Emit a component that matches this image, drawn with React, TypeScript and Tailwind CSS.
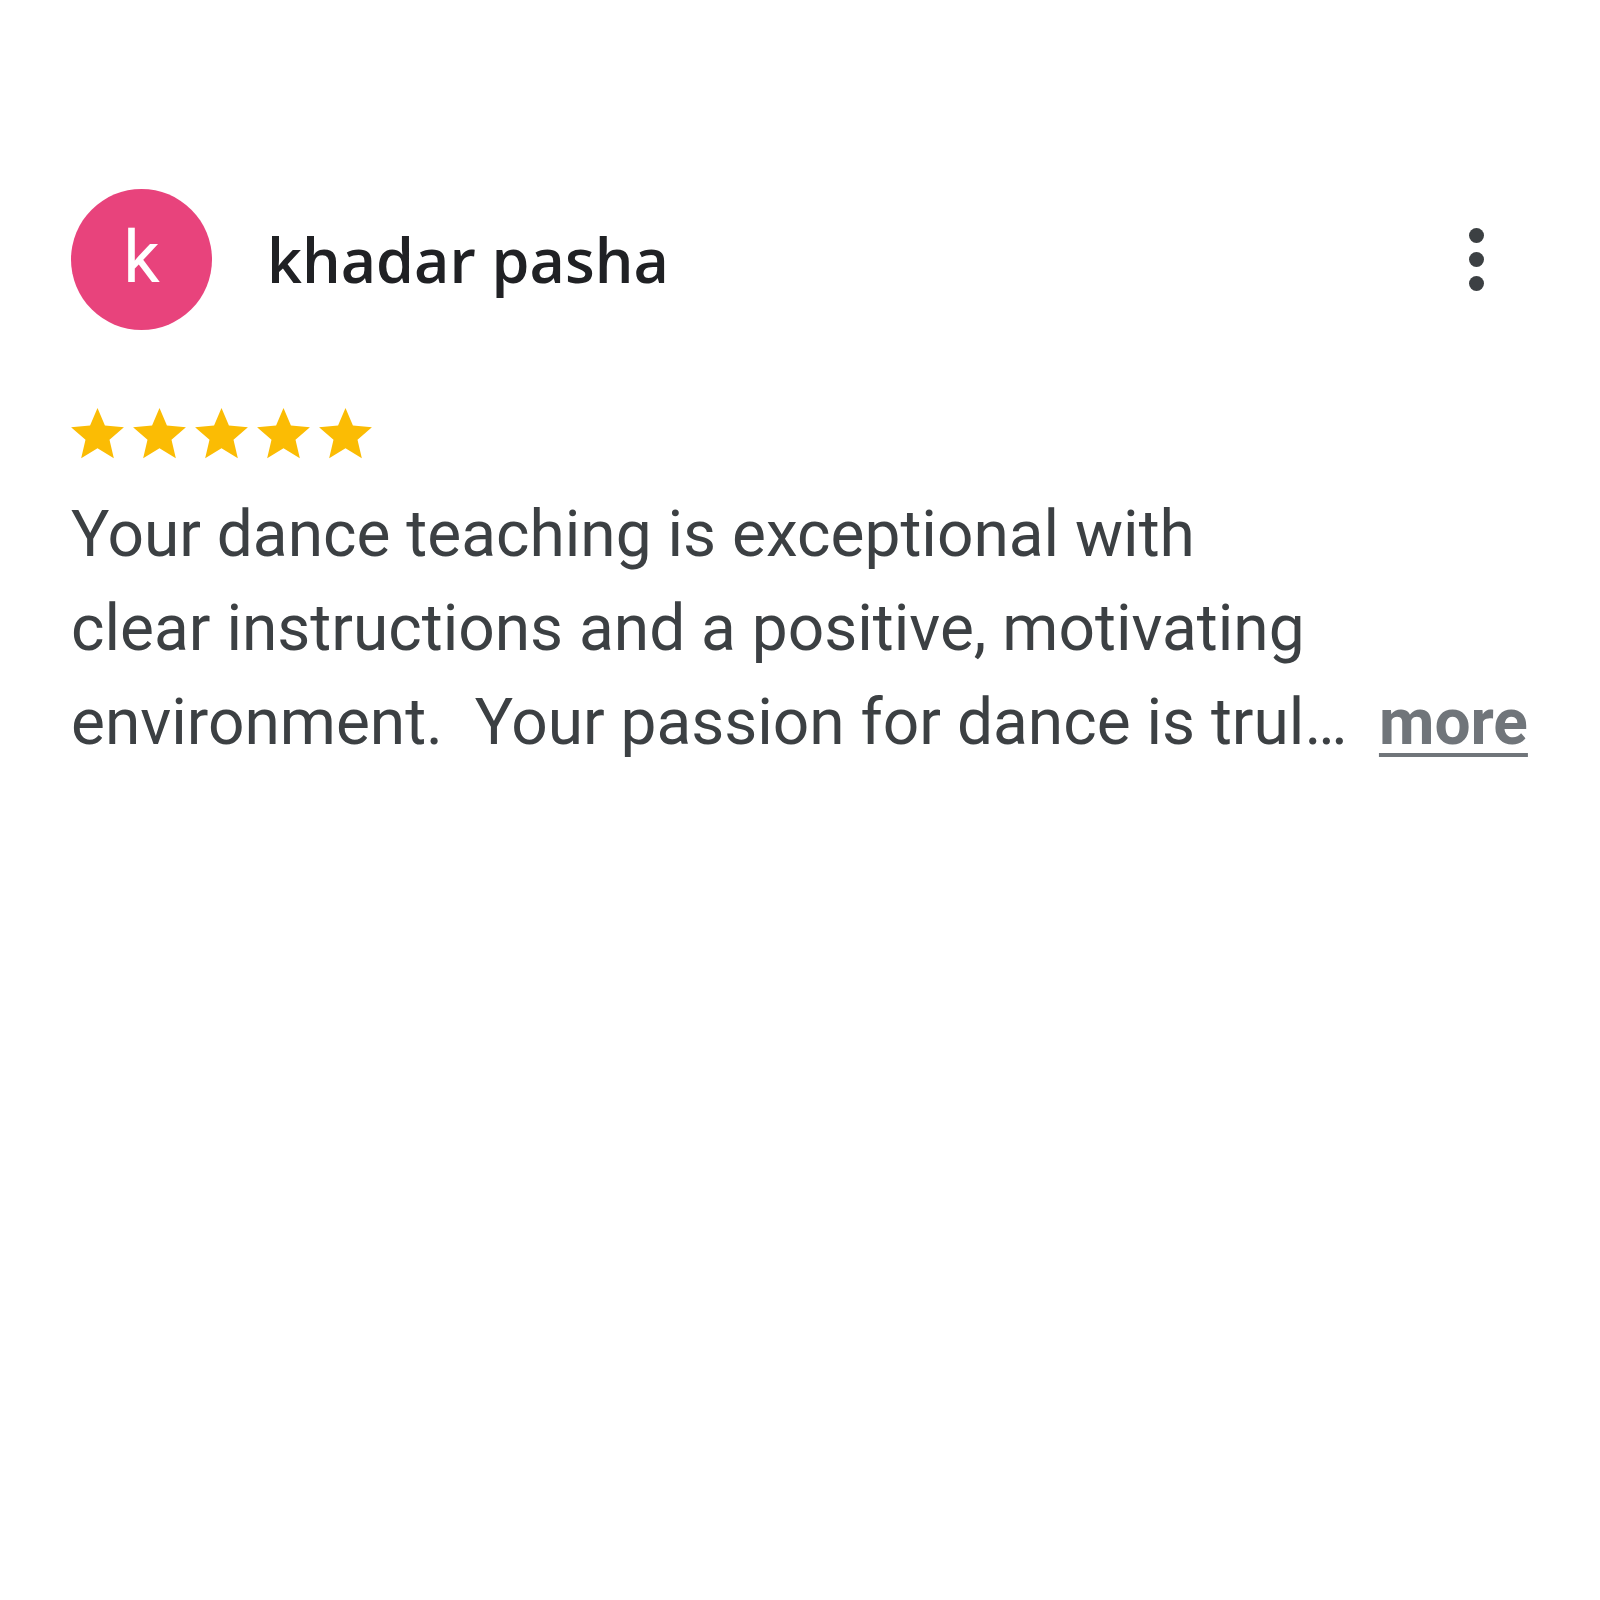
import React from "react";

const Star = () => (
  <svg width="53" height="51" viewBox="2 2 20 19.3" className="block">
    <path d="M12 17.27L18.18 21l-1.64-7.03L22 9.24l-7.19-.61L12 2 9.19 8.63 2 9.24l5.46 4.73L5.82 21z" fill="#FBBC04" />
  </svg>
);

export default function App() {
  return (
    <div className="w-[1600px] h-[1600px] bg-white relative" style={{ fontFamily: "Roboto, sans-serif" }}>
      <div className="pt-[189px] pl-[71px] pr-[72px]">
        <div className="flex items-center">
          <div className="w-[141px] h-[141px] rounded-full bg-[#E8437C] flex items-center justify-center text-white text-[72px] leading-none pb-[4px]" style={{ fontFamily: "Roboto, sans-serif" }}>
            k
          </div>
          <div className="ml-[55px] text-[61px] font-semibold text-[#202124]" style={{ fontFamily: "'Open Sans', sans-serif" }}>
            khadar pasha
          </div>
          <div className="ml-auto mr-[44px] flex flex-col items-center gap-[9px]">
            <div className="w-[15px] h-[15px] rounded-full bg-[#3c4043]" />
            <div className="w-[15px] h-[15px] rounded-full bg-[#3c4043]" />
            <div className="w-[15px] h-[15px] rounded-full bg-[#3c4043]" />
          </div>
        </div>
        <div className="flex gap-[9px] mt-[78px]">
          <Star />
          <Star />
          <Star />
          <Star />
          <Star />
        </div>
        <div className="mt-[29px] text-[64px] leading-[94px] text-[#3c4043] whitespace-pre">
          <div>Your dance teaching is exceptional with</div>
          <div>clear instructions and a positive, motivating</div>
          <div>
            environment.  Your passion for dance is trul…  <span className="font-bold text-[#70757a] underline decoration-[4px] underline-offset-[9px]">more</span>
          </div>
        </div>
      </div>
    </div>
  );
}
